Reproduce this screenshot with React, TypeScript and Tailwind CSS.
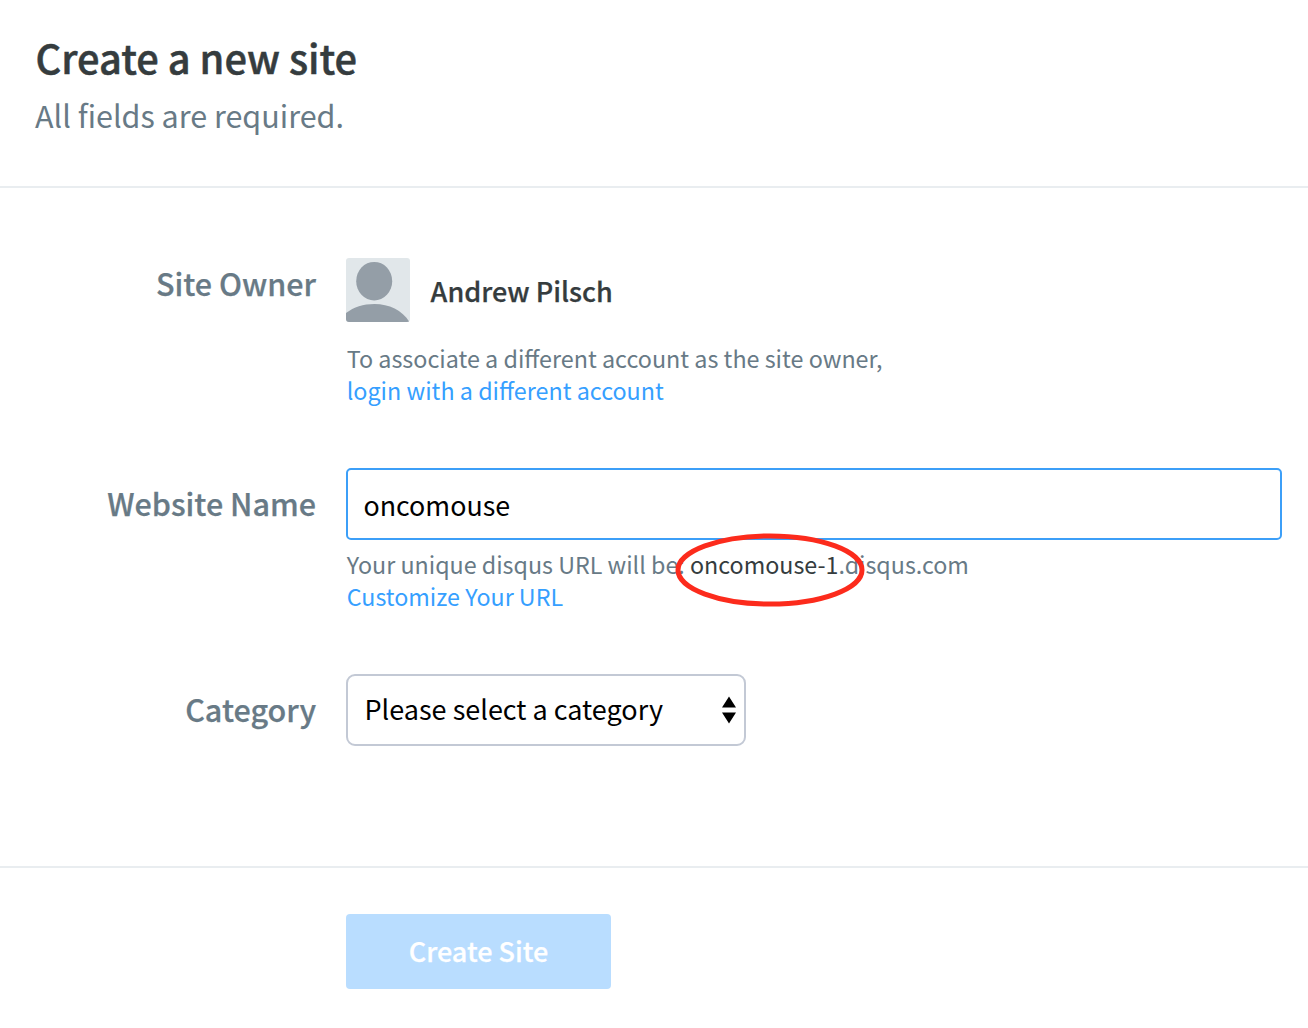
import type { ReactNode } from "react";

function Label({ children, className }: { children: ReactNode; className: string }) {
  return (
    <div
      className={`w-[316px] shrink-0 text-right text-[30.5px] leading-10 font-medium text-[#687a86] [-webkit-text-stroke:0.25px] ${className}`}
    >
      {children}
    </div>
  );
}

function Avatar() {
  return (
    <svg className="size-16 shrink-0 rounded-[3px]" viewBox="0 0 64 64" aria-hidden="true">
      <rect width="64" height="64" fill="#e1e7ea" />
      <ellipse cx="28.2" cy="23.2" rx="18" ry="19.3" fill="#949ea7" />
      <path d="M0 55C8 49 17 46 28.500 46C43 46 56 52 63.500 64H0Z" fill="#949ea7" />
    </svg>
  );
}

export default function App() {
  return (
    <div className="flex h-[1028px] w-[1308px] flex-col overflow-hidden bg-white font-['Noto_Sans_CJK_SC',sans-serif] text-[#353c3e]">
      <header className="h-[188px] shrink-0 border-b-2 border-[#e9edf0] pt-[33px] pl-[35px]">
        <h1 className="pl-[0.5px] text-[39.8px] leading-[48px] font-medium [-webkit-text-stroke:0.5px]">
          Create a new site
        </h1>
        <p className="mt-3.5 text-[30.5px] leading-10 text-[#687a86]">All fields are required.</p>
      </header>

      <main className="flex h-[680px] shrink-0 flex-col border-b-2 border-[#e9edf0] pt-[70px]">
        <section className="flex h-[210px] gap-[30px]">
          <Label className="pt-[5px]">Site Owner</Label>
          <div>
            <div className="flex h-16 items-center gap-[20.6px]">
              <Avatar />
              <span className="pt-0.5 text-[27px] leading-[64px] font-medium [-webkit-text-stroke:0.25px]">
                Andrew Pilsch
              </span>
            </div>
            <p className="mt-5 pl-[0.7px] text-[23.34px] leading-8 text-[#687a86]">
              To associate a different account as the site owner,
              <br />
              <a className="text-[#369fff]">login with a different account</a>
            </p>
          </div>
        </section>

        <section className="flex h-[206px] gap-[30px]">
          <Label className="pt-[15px]">Website Name</Label>
          <div>
            <input
              className="block h-[72px] w-[936px] rounded-[5px] border-2 border-[#3c9ff8] px-[15.5px] text-[26.8px] text-black outline-none"
              defaultValue="oncomouse"
              aria-label="Website Name"
            />
            <p className="mt-2 pl-[0.7px] text-[23.28px] leading-8 text-[#687a86]">
              Your unique disqus URL will be:{" "}
              <span className="relative text-[#353c3e]">
                oncomouse-1
                <svg
                  className="pointer-events-none absolute top-[-14px] left-[-15px] h-[74px] w-[190px]"
                  viewBox="0 0 190 74"
                  aria-hidden="true"
                >
                  <ellipse cx="95" cy="37" rx="92" ry="34" fill="none" stroke="#fc2b1c" strokeWidth="5" />
                </svg>
              </span>
              .disqus.com
              <br />
              <a className="text-[#369fff]">Customize Your URL</a>
            </p>
          </div>
        </section>

        <section className="flex gap-[30px]">
          <Label className="pt-[15px]">Category</Label>
          <button className="flex h-[72px] w-[400px] items-center justify-between rounded-[9px] border-2 border-[#c3c9d5] pr-2 pl-[16.5px] text-[27px] leading-10 text-black">
            <span className="pb-0.5">Please select a category</span>
            <svg className="h-7 w-3.5" viewBox="0 0 14 28" aria-hidden="true">
              <path d="M7 0.500L14 11.500H0ZM7 27.500L0 16.500H14Z" />
            </svg>
          </button>
        </section>
      </main>

      <footer className="pt-[46px] pl-[346px]">
        <button className="h-[75px] w-[265px] rounded-[4px] bg-[#b9ddff] text-[27px] font-medium text-white [-webkit-text-stroke:0.25px]">
          Create Site
        </button>
      </footer>
    </div>
  );
}
